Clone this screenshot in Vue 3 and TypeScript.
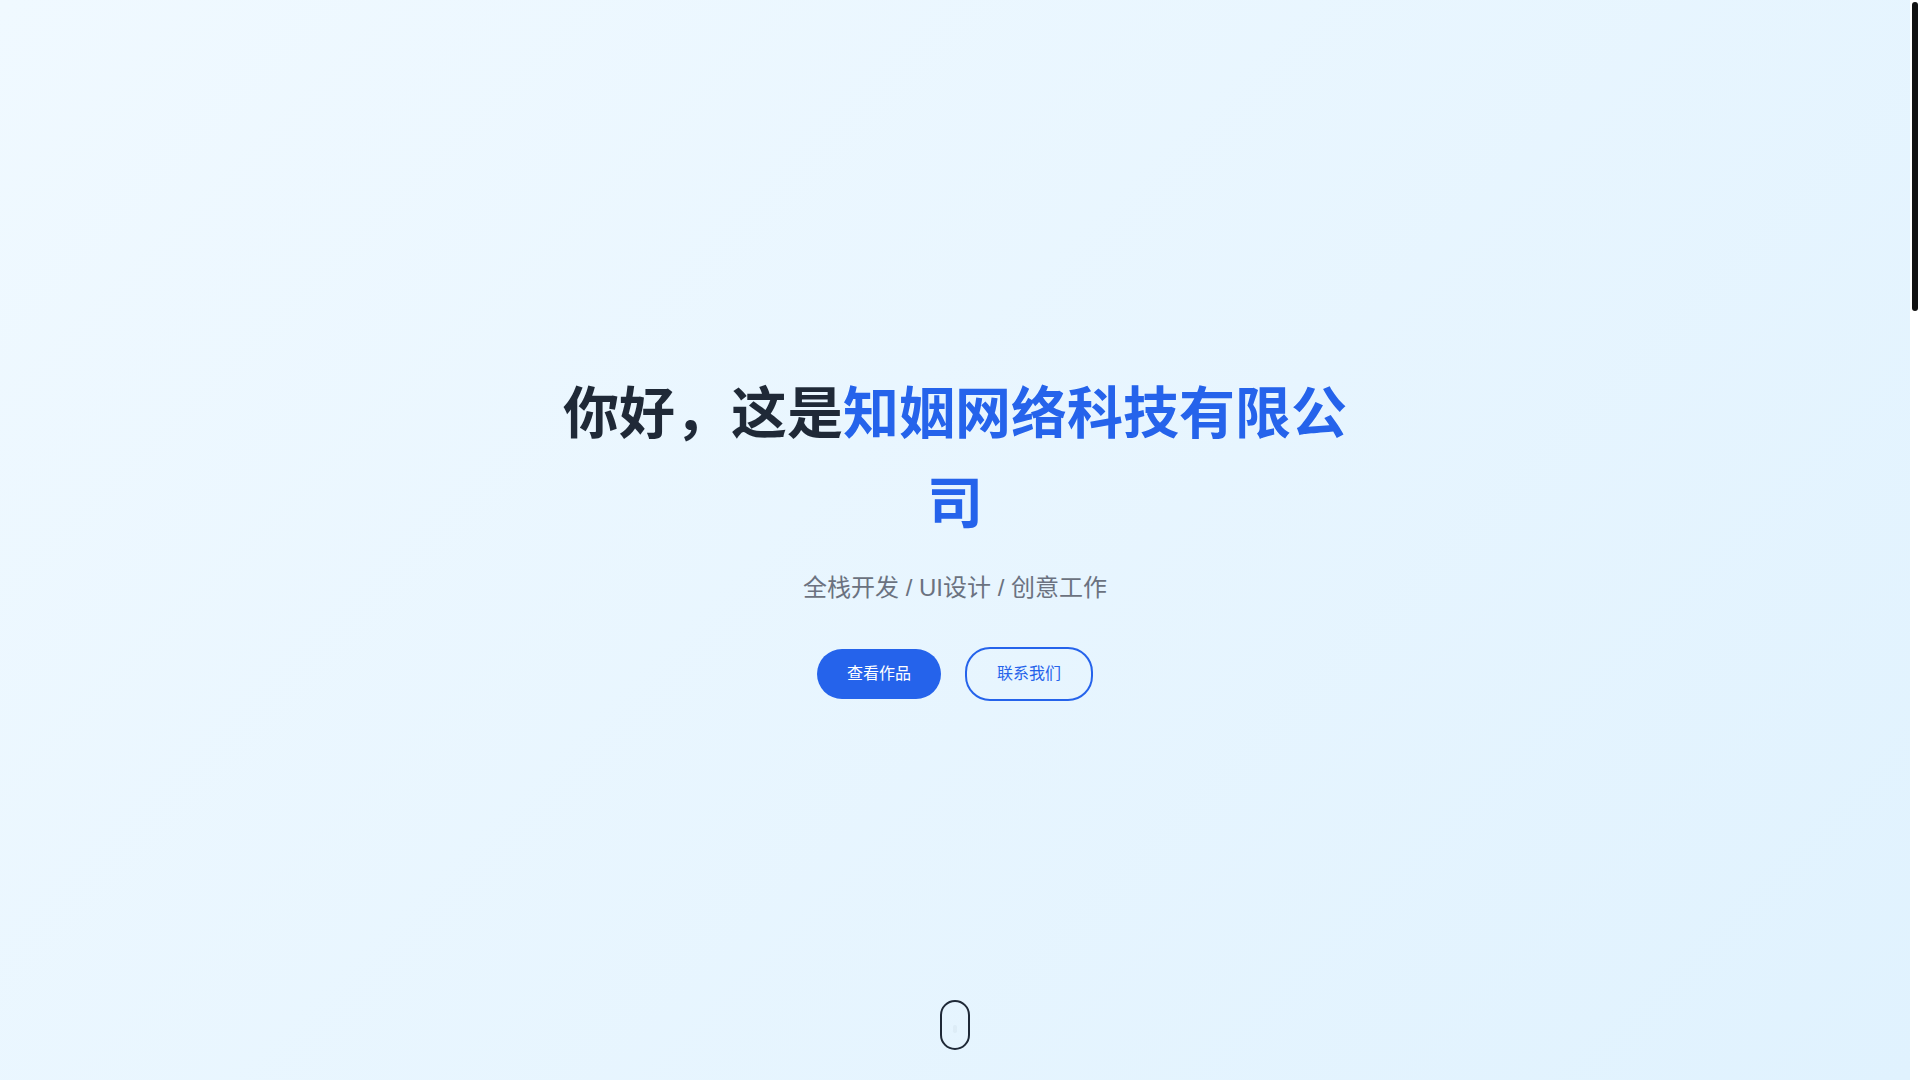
<script setup lang="ts">
interface HeroLink {
  label: string
  href: string
  variant: 'primary' | 'secondary'
}

const greeting = '你好，这是'
const company = '知姻网络科技有限公司'
const tagline = '全栈开发 / UI设计 / 创意工作'
const links: HeroLink[] = [
  { label: '查看作品', href: '#portfolio', variant: 'primary' },
  { label: '联系我们', href: '#contact', variant: 'secondary' },
]
</script>

<template>
  <div class="page">
    <main class="hero">
      <section class="content">
        <h1 class="title">{{ greeting }}<span class="highlight">{{ company }}</span></h1>
        <p class="tagline">{{ tagline }}</p>
        <nav class="actions">
          <a
            v-for="link in links"
            :key="link.href"
            :href="link.href"
            class="btn"
            :class="link.variant"
          >{{ link.label }}</a>
        </nav>
      </section>
      <div class="mouse" aria-hidden="true"><span class="wheel"></span></div>
    </main>
    <div class="track" aria-hidden="true"><div class="thumb"></div></div>
  </div>
</template>

<style>
body {
  margin: 0;
}
</style>

<style scoped>
.page {
  display: flex;
  min-height: 100vh;
  background: #fff;
  font-family: "Liberation Sans", "Noto Sans CJK SC", sans-serif;
}

.hero {
  position: relative;
  flex: 1;
  display: flex;
  align-items: center;
  justify-content: center;
  background: linear-gradient(135deg, #f0f9ff 0%, #e0f2fe 100%);
}

.content {
  width: 100%;
  max-width: 800px;
  padding-bottom: 10px;
  text-align: center;
}

.title {
  margin: 0 0 20px;
  font-size: 56px;
  font-weight: 700;
  line-height: 90px;
  color: #1f2937;
}

.highlight {
  color: #2563eb;
}

.tagline {
  margin: 0 0 40px;
  font-size: 24px;
  line-height: 38px;
  color: #6b7280;
}

.actions {
  display: flex;
  align-items: center;
  justify-content: center;
  gap: 24px;
}

.btn {
  padding: 12px 30px;
  border-radius: 25px;
  font-size: 16px;
  line-height: 26px;
  text-decoration: none;
}

.primary {
  background: #2563eb;
  color: #fff;
}

.secondary {
  border: 2px solid #2563eb;
  color: #2563eb;
}

.mouse {
  position: absolute;
  bottom: 30px;
  left: 50%;
  transform: translateX(-50%);
  box-sizing: border-box;
  display: flex;
  align-items: center;
  justify-content: center;
  width: 30px;
  height: 50px;
  border: 2px solid #1f2937;
  border-radius: 15px;
}

.wheel {
  width: 4px;
  height: 8px;
  margin-top: 8px;
  border-radius: 2px;
  background: #1f2937;
  opacity: 0.04;
}

.track {
  box-sizing: border-box;
  width: 10px;
  padding: 2px;
}

.thumb {
  height: 309px;
  border-radius: 3px;
  background: #111;
}
</style>
